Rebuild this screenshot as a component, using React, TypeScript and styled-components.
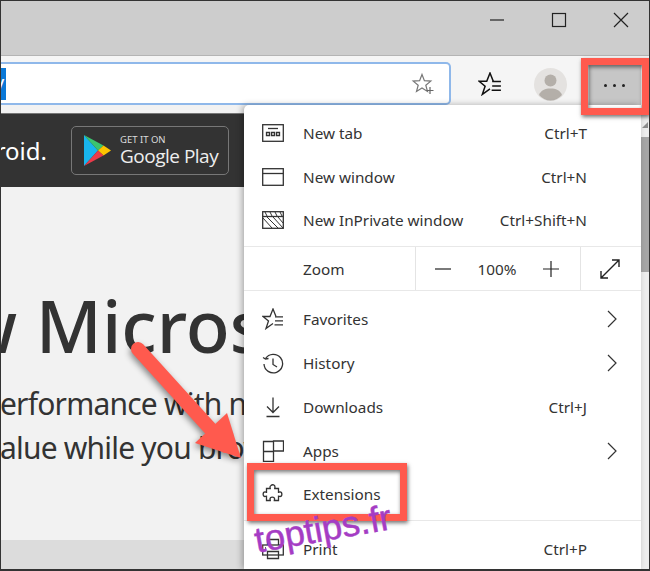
import { ReactNode } from "react";
import styled, { createGlobalStyle } from "styled-components";

const Global = createGlobalStyle`
  html, body { margin: 0; padding: 0; background: #fff; }
  * { box-sizing: border-box; }
`;

const Win = styled.div`
  position: relative;
  width: 650px;
  height: 571px;
  overflow: hidden;
  display: flex;
  flex-direction: column;
  border: solid #333;
  border-width: 1px 1px 2px 1px;
  font-family: "Noto Sans", "Open Sans", sans-serif;
  color: #333;
`;

const TitleBar = styled.div`
  height: 55px;
  flex: none;
  background: #cdcdcd;
  border-bottom: 1px solid #b4b4b4;
  display: flex;
  justify-content: flex-end;
  align-items: flex-start;
  padding: 11px 19px 0 0;
  gap: 44px;
`;

const WinBtn = styled.svg`
  width: 18px;
  height: 16px;
  fill: none;
  stroke: #222;
  stroke-width: 1.2;
`;

const Toolbar = styled.div`
  height: 49px;
  flex: none;
  background: #f5f5f5;
  display: flex;
  align-items: flex-end;
`;

const Address = styled.div`
  width: 450px;
  height: 43px;
  flex: none;
  background: #fff;
  border: 2px solid #8fb8ea;
  border-left: 0;
  border-radius: 0 5px 5px 0;
  display: flex;
  align-items: center;
  justify-content: space-between;
  padding-right: 14px;
`;

const Selected = styled.div`
  width: 5px;
  height: 32px;
  background: #0a78d7;
  color: #fff;
  font-size: 20px;
  line-height: 30px;
  overflow: hidden;
  text-indent: -7px;
`;

const ToolIcons = styled.div`
  flex: 1;
  align-self: stretch;
  display: flex;
  align-items: center;
  padding: 7px 8px 0 27px;
`;

const FavIcon = styled.svg`
  width: 24px;
  height: 24px;
  flex: none;
  fill: none;
  stroke: #111;
  stroke-width: 1.4;
`;

const Avatar = styled.svg`
  width: 33px;
  height: 33px;
  flex: none;
  margin-left: 32px;
`;

const MoreBtn = styled.div`
  margin-left: auto;
  width: 52px;
  height: 43px;
  flex: none;
  margin-top: 3px;
  padding-right: 2px;
  background: #c6c6c6;
  display: flex;
  align-items: center;
  justify-content: center;
  gap: 6px;
`;

const Dot = styled.span`
  width: 3px;
  height: 3px;
  border-radius: 50%;
  background: #222;
`;

const Body = styled.div`
  flex: 1;
  min-height: 0;
  display: flex;
  position: relative;
`;

const Page = styled.div`
  flex: 1;
  min-width: 0;
  overflow: hidden;
  background: #f2f2f2;
  display: flex;
  flex-direction: column;
  padding-top: 8px;
`;

const Band = styled.div`
  height: 74px;
  flex: none;
  background: #333;
  border-top: 1px solid #777;
  display: flex;
  align-items: center;
  gap: 24px;
  color: #fff;
`;

const BandText = styled.div`
  font-size: 24px;
  width: 46px;
  flex: none;
  overflow: hidden;
  display: flex;
  justify-content: flex-end;
  white-space: nowrap;
`;

const PlayBadge = styled.div`
  width: 158px;
  height: 49px;
  border: 1px solid #777;
  border-radius: 5px;
  display: flex;
  align-items: center;
  padding-left: 12px;
  gap: 9px;
`;

const PlayText = styled.div`
  display: flex;
  flex-direction: column;
  line-height: 1;
`;

const PlaySmall = styled.span`
  font-size: 9.5px;
  margin-bottom: 2px;
  color: #ddd;
`;

const PlayBig = styled.span`
  font-family: "Open Sans", sans-serif;
  font-size: 19px;
  letter-spacing: -0.5px;
  color: #eee;
`;

const Hero = styled.h1`
  margin: 93px 0 0 -42px;
  font-size: 72px;
  font-weight: 500;
  line-height: 90px;
  white-space: nowrap;
  color: #333;
`;

const Lead = styled.p`
  margin: 0 0 0 -1px;
  font-size: 30px;
  line-height: 43.5px;
  letter-spacing: -0.8px;
  white-space: nowrap;
  &:first-of-type { margin-top: 12px; }
`;

const PageFoot = styled.div`
  margin-top: auto;
  height: 29px;
  flex: none;
  background: #dcdcdc;
`;

const Scroll = styled.div`
  width: 8px;
  flex: none;
  background: #ededed;
  padding-top: 17px;
`;

const ScrollArrow = styled.div`
  width: 0;
  height: 0;
  margin: 0 0 9px 1px;
  border-style: solid;
  border-width: 0 0 6px 6px;
  border-color: transparent transparent #8c8c8c transparent;
`;

const Thumb = styled.div`
  height: 135px;
  background: #a6a6a6;
`;

const Menu = styled.div`
  position: absolute;
  top: 0;
  left: 243px;
  width: 397px;
  bottom: 0;
  background: #fff;
  border-radius: 5px 0 0 0;
  box-shadow: -2px 0 6px rgba(0, 0, 0, 0.3);
  display: flex;
  flex-direction: column;
  padding-top: 6px;
`;

const Group = styled.div<{ $pad?: boolean }>`
  padding-top: ${(p) => (p.$pad ? 6 : 0)}px;
  padding-bottom: 4px;
  border-bottom: 1px solid #e8e8e8;
`;

const Row = styled.div`
  height: 43.8px;
  display: flex;
  align-items: center;
  padding-left: 18px;
  font-size: 15.3px;
`;

const Ico = styled.svg`
  width: 22px;
  height: 22px;
  flex: none;
  margin-right: 19px;
  fill: none;
  stroke: #333;
  stroke-width: 1.3;
`;

const Label = styled.span`
  flex: 1;
`;

const Keys = styled.span`
  width: 100px;
  margin-right: 54px;
  text-align: right;
`;

const Chevron = styled.svg`
  width: 12px;
  height: 20px;
  margin-right: 23px;
  fill: none;
  stroke: #333;
  stroke-width: 1.2;
`;

const ZoomRow = styled.div`
  height: 44px;
  flex: none;
  display: flex;
  align-items: stretch;
  border-bottom: 1px solid #e8e8e8;
  font-size: 15.3px;
`;

const ZoomLabel = styled.div`
  width: 171px;
  padding-left: 59px;
  display: flex;
  align-items: center;
`;

const ZoomControls = styled.div`
  width: 166px;
  border-left: 1px solid #e4e4e4;
  border-right: 1px solid #e4e4e4;
  display: flex;
  align-items: center;
  justify-content: space-between;
  padding: 0 21px 0 19px;
`;

const ZoomIcon = styled.svg`
  width: 16px;
  height: 16px;
  fill: none;
  stroke: #222;
  stroke-width: 1.2;
`;

const Full = styled.svg`
  margin-left: 18px;
  align-self: center;
  width: 22px;
  height: 22px;
  fill: none;
  stroke: #222;
  stroke-width: 1.4;
`;

const Callout = styled.div<{ $l: number; $t: number; $w: number; $h: number }>`
  position: absolute;
  left: ${(p) => p.$l}px;
  top: ${(p) => p.$t}px;
  width: ${(p) => p.$w}px;
  height: ${(p) => p.$h}px;
  border: 7px solid #ff5a4e;
  box-shadow: 1px 2px 4px rgba(0, 0, 0, 0.55), inset 1px 2px 4px rgba(0, 0, 0, 0.55);
`;

const Arrow = styled.svg`
  position: absolute;
  left: 120px;
  top: 335px;
  width: 130px;
  height: 135px;
  filter: drop-shadow(-1px 3px 3px rgba(0, 0, 0, 0.45));
`;

const Watermark = styled.div`
  position: absolute;
  left: 254px;
  top: 518px;
  font-family: "Liberation Sans", sans-serif;
  font-size: 36px;
  line-height: 44px;
  color: #a53cc4;
  -webkit-text-stroke: 0.5px #a53cc4;
  transform: rotate(-10deg);
  transform-origin: left center;
  white-space: nowrap;
`;

const icons: Record<string, ReactNode> = {
  tab: (
    <>
      <rect x="0.7" y="2.7" width="20.6" height="16.6" />
      <path d="M6 6.5h10" />
      <path d="M4.5 10.5h3v3h-3zM9.5 10.5h3v3h-3zM14.5 10.5h3v3h-3z" />
    </>
  ),
  window: (
    <>
      <rect x="0.7" y="2.7" width="20.6" height="16.6" />
      <path d="M.7 7.5h20.6" />
    </>
  ),
  private: (
    <>
      <rect x="0.7" y="2.7" width="20.6" height="16.6" />
      <path d="M.7 7.5h20.6" />
      <path d="M3 3l2 4M8 3l2 4M13 3l2 4M18 3l2 4M1 9l9 10M5 8l11 11M11 8l10 11M16 8l5 6" strokeWidth="1" />
    </>
  ),
  favorites: (
    <>
      <path d="M14 8.500L11 1 8 8.500H1l5.500 4.500-2.500 7.500 7-5" />
      <path d="M13 8.800h8M13 12.800h8M12.500 16.800h8.500" />
    </>
  ),
  history: (
    <>
      <path d="M3.500 6.500A9.300 9.300 0 1 1 2 12" />
      <path d="M1 5.500l2.500 1.500 3-.5" />
      <path d="M11 6.500v6l4 2.500" />
    </>
  ),
  downloads: <path d="M11 1.500v15M5 10.500l6 6 6-6M4.500 20.500h13" />,
  apps: <path d="M1.500 1.500h10v10h-10zM1.500 11.500h10v10h-10zM11.500 1h10v10h-10z" />,
  extensions: (
    <path d="M9 2.500c1.500-1.500 4-.5 4 1.500 0 .8-.3 1-.3 1.500h3.800v3.800c.5 0 .8-.4 1.500-.4 2.500 0 2.500 4.600 0 4.600-.7 0-1-.4-1.500-.4v4.400h-4.200c0-.5.3-.9.300-1.500 0-2.500-4.600-2.500-4.600 0 0 .6.300 1 .3 1.500H4.500v-4.400c-.5 0-.8.4-1.500.4-2.500 0-2.500-4.600 0-4.600.7 0 1 .4 1.500.4V5.500h3.800c0-.5-.3-.7-.3-1.500 0-.6.3-1.100 1-1.500z" />
  ),
  print: (
    <>
      <path d="M5.500 7V1.500h11V7" />
      <rect x="0.700" y="7" width="20.600" height="10" />
      <path d="M5.500 13.500h11v7h-11z" />
      <path d="M3 10h1" />
    </>
  ),
};

type Item = { icon: string; label: string; keys?: string; more?: boolean };

const top: Item[] = [
  { icon: "tab", label: "New tab", keys: "Ctrl+T" },
  { icon: "window", label: "New window", keys: "Ctrl+N" },
  { icon: "private", label: "New InPrivate window", keys: "Ctrl+Shift+N" },
];

const middle: Item[] = [
  { icon: "favorites", label: "Favorites", more: true },
  { icon: "history", label: "History", more: true },
  { icon: "downloads", label: "Downloads", keys: "Ctrl+J" },
  { icon: "apps", label: "Apps", more: true },
  { icon: "extensions", label: "Extensions" },
];

function MenuRow({ item }: { item: Item }) {
  return (
    <Row>
      <Ico viewBox="0 0 22 22">{icons[item.icon]}</Ico>
      <Label>{item.label}</Label>
      {item.keys && <Keys>{item.keys}</Keys>}
      {item.more && (
        <Chevron viewBox="0 0 12 20">
          <path d="M2 2l8 8-8 8" />
        </Chevron>
      )}
    </Row>
  );
}

export default function App() {
  return (
    <>
      <Global />
      <Win>
        <TitleBar>
          <WinBtn viewBox="0 0 18 16">
            <path d="M2 8h14" />
          </WinBtn>
          <WinBtn viewBox="0 0 18 16">
            <rect x="2.500" y="1.500" width="13" height="13" />
          </WinBtn>
          <WinBtn viewBox="0 0 18 16">
            <path d="M2 1l14 14M16 1L2 15" />
          </WinBtn>
        </TitleBar>
        <Toolbar>
          <Address>
            <Selected>y</Selected>
            <svg width="24" height="24" viewBox="0 0 24 24" fill="none" stroke="#777" strokeWidth="1.200">
              <path d="M11 2.500l2.400 6.200 6.400.4-5 4.100 1.700 6.300L11 16l-5.500 3.500 1.700-6.300-5-4.100 6.400-.4z" />
              <path d="M19 15v7M15.500 18.500h7" stroke="#666" />
            </svg>
          </Address>
          <ToolIcons>
            <FavIcon viewBox="0 0 22 22">{icons.favorites}</FavIcon>
            <Avatar viewBox="0 0 33 33">
              <circle cx="16.500" cy="16.500" r="16.500" fill="#e4e2e0" />
              <circle cx="16.500" cy="12.500" r="6" fill="#b4afa9" />
              <path d="M5 27c2-5 6-6.500 11.500-6.500S26 22 28 27c-3 3.500-7 5.500-11.500 5.500S8 30.500 5 27z" fill="#b4afa9" />
            </Avatar>
            <MoreBtn>
              <Dot />
              <Dot />
              <Dot />
            </MoreBtn>
          </ToolIcons>
        </Toolbar>
        <Body>
          <Page>
            <Band>
              <BandText>
                <span>Android.</span>
              </BandText>
              <PlayBadge>
                <svg width="27" height="31" viewBox="0 0 27 31">
                  <path d="M0 0l14 15.500L0 31z" fill="#18b5ee" />
                  <path d="M0 0l19.500 10.500L14 15.500z" fill="#3bc46f" />
                  <path d="M19.500 10.500L27 15.500l-7.500 5L14 15.500z" fill="#fdc400" />
                  <path d="M14 15.500l5.500 5L0 31z" fill="#ea3a4a" />
                </svg>
                <PlayText>
                  <PlaySmall>GET IT ON</PlaySmall>
                  <PlayBig>Google Play</PlayBig>
                </PlayText>
              </PlayBadge>
            </Band>
            <Hero>w Microsoft Edge</Hero>
            <Lead>erformance with new</Lead>
            <Lead>alue while you browse</Lead>
            <PageFoot />
          </Page>
          <Scroll>
            <ScrollArrow />
            <Thumb />
          </Scroll>
          <Menu>
            <Group>
              {top.map((item) => (
                <MenuRow key={item.label} item={item} />
              ))}
            </Group>
            <ZoomRow>
              <ZoomLabel>Zoom</ZoomLabel>
              <ZoomControls>
                <ZoomIcon viewBox="0 0 16 16">
                  <path d="M0 8h16" />
                </ZoomIcon>
                <span>100%</span>
                <ZoomIcon viewBox="0 0 16 16">
                  <path d="M0 8h16M8 0v16" />
                </ZoomIcon>
              </ZoomControls>
              <Full viewBox="0 0 22 22">
                <path d="M2 20L20 2M13 2h7v7M2 13v7h7" />
              </Full>
            </ZoomRow>
            <Group $pad>
              {middle.map((item) => (
                <MenuRow key={item.label} item={item} />
              ))}
            </Group>
            <Group $pad>
              <MenuRow item={{ icon: "print", label: "Print", keys: "Ctrl+P" }} />
            </Group>
          </Menu>
        </Body>
        <Callout $l={580} $t={57} $w={68} $h={57} />
        <Callout $l={246} $t={462} $w={160} $h={58} />
        <Arrow viewBox="0 0 130 135">
          <path d="M17 13l88 97" stroke="#ff5a4e" strokeWidth="14" strokeLinecap="round" fill="none" />
          <path d="M106 77l14 45-46-15z" fill="#ff5a4e" />
        </Arrow>
        <Watermark>toptips.fr</Watermark>
      </Win>
    </>
  );
}
